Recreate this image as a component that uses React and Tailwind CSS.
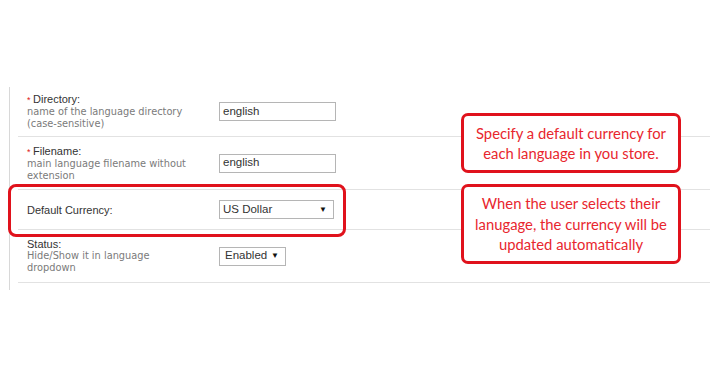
export default function App() {
  const label = "font-['Liberation_Sans',Arial,sans-serif] text-[11px] leading-[12px] text-[#333]";
  const desc = "font-['DejaVu_Sans',Verdana,sans-serif] text-[9.8px] leading-[12px] text-[#7a7a7a]";
  const input = "h-[19px] border border-[#b5b5b5] bg-white px-[3px] font-['Liberation_Sans',Arial,sans-serif] text-[11.5px] text-[#333] flex items-center";
  return (
    <div className="relative w-[710px] h-[380px] bg-white overflow-hidden">
      <div className="pt-[87px]">
        <div className="ml-[9px] border-l border-[#d8d8d8] h-[203px]">
          <div className="ml-[8px]">
            <div className="h-[50px] border-b border-[#e2e2e2] flex items-center pl-[9px]">
              <div className="w-[192px]">
                <div className={label}><span className="text-[#e02020] text-[9px]">* </span>Directory:</div>
                <div className={desc}>name of the language directory</div>
                <div className={desc}>(case-sensitive)</div>
              </div>
              <div className={input + " w-[117px]"}>english</div>
            </div>
            <div className="h-[53px] border-b border-[#e2e2e2] flex items-center pl-[9px]">
              <div className="w-[192px]">
                <div className={label}><span className="text-[#e02020] text-[9px]">* </span>Filename:</div>
                <div className={desc}>main language filename without</div>
                <div className={desc}>extension</div>
              </div>
              <div className={input + " w-[117px]"}>english</div>
            </div>
            <div className="h-[40px] border-b border-[#e2e2e2] flex items-center pl-[9px]">
              <div className="w-[192px]">
                <div className={label}>Default Currency:</div>
              </div>
              <div className={input + " w-[115px] justify-between pr-[6px]"}>
                <span>US Dollar</span>
                <span className="text-[8px] text-[#111]">▼</span>
              </div>
            </div>
            <div className="h-[53px] border-b border-[#e2e2e2] flex items-center pl-[9px]">
              <div className="w-[192px]">
                <div className={label}>Status:</div>
                <div className={desc}>Hide/Show it in language</div>
                <div className={desc}>dropdown</div>
              </div>
              <div className={input + " w-[67px] justify-between pl-[5px] pr-[6px]"}>
                <span>Enabled</span>
                <span className="text-[8px] text-[#111]">▼</span>
              </div>
            </div>
          </div>
        </div>
      </div>

      <div className="absolute left-[8px] top-[184px] w-[338px] h-[53px] border-[3px] border-[#e0121c] rounded-[8px]" />

      <div className="absolute left-[461px] top-[113px] w-[220px] h-[60px] border-[3px] border-[#e0121c] rounded-[7px] bg-white flex flex-col items-center justify-center font-['Lato','Open_Sans',sans-serif] text-[14.8px] leading-[20px] text-[#e8262e]">
        <div>Specify a default currency for</div>
        <div>each language in you store.</div>
      </div>

      <div className="absolute left-[461px] top-[184px] w-[220px] h-[80px] border-[3px] border-[#e0121c] rounded-[7px] bg-white flex flex-col items-center justify-center font-['Lato','Open_Sans',sans-serif] text-[14.8px] leading-[20.5px] text-[#e8262e]">
        <div>When the user selects their</div>
        <div>lanugage, the currency will be</div>
        <div>updated automatically</div>
      </div>
    </div>
  );
}
